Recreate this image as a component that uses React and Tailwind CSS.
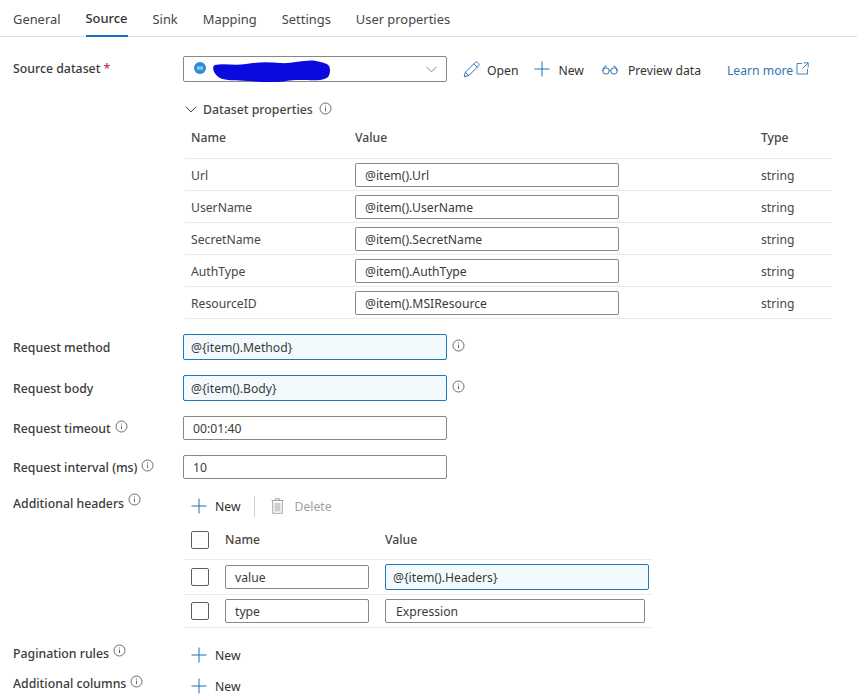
const FONT = "font-['Noto_Sans',sans-serif]";

const TABS = ['General', 'Source', 'Sink', 'Mapping', 'Settings', 'User properties'];

const DATASET_PROPS = [
  ['Url', '@item().Url'],
  ['UserName', '@item().UserName'],
  ['SecretName', '@item().SecretName'],
  ['AuthType', '@item().AuthType'],
  ['ResourceID', '@item().MSIResource'],
];

const Info = ({ className = '' }) => (
  <svg width="13" height="13" viewBox="0 0 13 13" fill="none" className={`shrink-0 text-[#5a5a58] ${className}`}>
    <circle cx="6.5" cy="6.5" r="5.5" stroke="currentColor" strokeWidth="0.9" />
    <path d="M6.5 5.6v3.6M6.5 3.5v1" stroke="currentColor" strokeWidth="0.9" />
  </svg>
);

const Plus = () => (
  <svg width="16" height="16" viewBox="0 0 16 16" fill="none" className="shrink-0 text-[#1c6fb8]">
    <path d="M8 .5v15M.5 8h15" stroke="currentColor" strokeWidth="1" />
  </svg>
);

const Pencil = () => (
  <svg width="17" height="17" viewBox="0 0 17 17" fill="none" className="shrink-0 text-[#2f75b5]">
    <path d="M1.2 15.8l1.2-4.6L12.2 1.4a1.6 1.6 0 012.3 0l1.1 1.1a1.6 1.6 0 010 2.3L5.8 14.6z M2.4 11.2l3.4 3.4 M10.8 2.8l3.4 3.4" stroke="currentColor" strokeWidth="1" strokeLinejoin="round" />
  </svg>
);

const Glasses = () => (
  <svg width="16" height="10" viewBox="0 0 16 10" fill="none" className="shrink-0 text-[#2f75b5]">
    <circle cx="4" cy="6" r="3.2" stroke="currentColor" strokeWidth="1" />
    <circle cx="12" cy="6" r="3.2" stroke="currentColor" strokeWidth="1" />
    <path d="M7 5.600c.6-.5 1.400-.5 2 0M.8 6C1 3 2.500 1 4.500 1M15.200 6C15 3 13.500 1 11.500 1" stroke="currentColor" strokeWidth="1" />
  </svg>
);

const ExternalLink = () => (
  <svg width="13" height="13" viewBox="0 0 13 13" fill="none" className="shrink-0 text-[#2f75b5]">
    <path d="M6 1.500H1v10.500h10.500V7M7.500 .8h4.700v4.700M12 1L6.500 6.500" stroke="currentColor" strokeWidth="0.9" />
  </svg>
);

const Trash = () => (
  <svg width="13" height="16" viewBox="0 0 13 16" fill="none" className="shrink-0 text-[#a6a6a6]">
    <path d="M.5 2.500h12M4.500 2.500V.7h4v1.800M1.700 2.500v12.800h9.600V2.500" stroke="currentColor" strokeWidth="1" />
    <path d="M3.500 5h6v8.500h-6z" fill="currentColor" opacity="0.55" />
  </svg>
);

const Chevron = ({ size = 11, className = '' }) => (
  <svg width={size} height={Math.round(size * 0.6)} viewBox="0 0 11 6.600" fill="none" className={`shrink-0 ${className}`}>
    <path d="M.5 .6l5 5 5-5" stroke="currentColor" strokeWidth="0.9" />
  </svg>
);

const TextBox = ({ value, focused, className = '' }) => (
  <div
    className={`flex items-center rounded-[2px] border pt-[3px] text-[12.200px] text-[#3b3a39] ${
      focused ? 'border-[#1f78b8] bg-[#f3fafe]' : 'border-[#8a8886] bg-white'
    } ${className}`}
  >
    {value}
  </div>
);

const Checkbox = ({ className = '' }) => (
  <div className={`h-[18px] w-[18px] shrink-0 rounded-[2px] border border-[#605e5c] bg-white ${className}`} />
);

const NewButton = ({ className = '' }) => (
  <div className={`flex items-center gap-[8px] text-[12.200px] text-[#323130] ${className}`}>
    <Plus />
    <span className="pt-[3px]">New</span>
  </div>
);

const Label = ({ children, info, infoClass = '', className = '' }) => (
  <div className={`flex w-[183px] shrink-0 items-center gap-[4px] pl-[13px] pt-[2px] text-[12.300px] font-medium text-[#3b3a39] ${className}`}>
    <span className="whitespace-nowrap">{children}</span>
    {info && <Info className={infoClass} />}
  </div>
);

export default function App() {
  return (
    <div className={`flex h-[698px] w-[857px] flex-col overflow-hidden bg-white leading-none ${FONT}`}>
      {/* tabs */}
      <div className="flex h-[37px] shrink-0 gap-[25px] border-b border-[#e1dfdd] pl-[13px] text-[12.900px] text-[#484644]">
        {TABS.map(t => (
          <div
            key={t}
            className={`flex h-[37px] items-center whitespace-nowrap pt-[2px] ${
              t === 'Source' ? 'border-b-2 border-[#1c6fb8] font-medium text-[#323130]' : ''
            }`}
          >
            {t}
          </div>
        ))}
      </div>

      {/* source dataset */}
      <div className="mt-[19px] flex h-[26px] shrink-0 items-center">
        <Label className="mb-[1px]">
          Source dataset <span className="font-normal text-[#a4262c]">*</span>
        </Label>
        <div className="relative flex h-[26px] w-[264px] items-center justify-between rounded-[2px] border border-[#8a8886] pl-[10px] pr-[9px]">
          <svg width="12" height="12" viewBox="0 0 12 12" className="mb-[2px] shrink-0">
            <circle cx="6" cy="6" r="6" fill="#2b8fdb" />
            <path d="M3 5.200h6M3 7h6" stroke="#fff" strokeWidth="0.8" />
          </svg>
          <svg width="120" height="22" viewBox="0 0 120 22" className="absolute left-[28px] top-[3px]">
            <path d="M3 5C12 3 22 6 34 4s22-2 34-1 26-4 36-2 14 3 14 9-2 9-10 10-22-1-34 1-26 1-38 0-22 0-28-3S-1 7 3 5z" fill="#0a0adf" />
          </svg>
          <span />
          <Chevron className="text-[#7a7a78]" />
        </div>
        <div className="ml-[16px] flex items-center text-[12.200px] text-[#323130]">
          <Pencil />
          <span className="ml-[7px] mt-[4px]">Open</span>
          <div className="ml-[16px] flex items-center gap-[8px]">
            <Plus />
            <span className="mt-[4px]">New</span>
          </div>
          <div className="ml-[18px] mt-[1px]"><Glasses /></div>
          <span className="ml-[10px] mt-[4px] whitespace-nowrap">Preview data</span>
          <span className="ml-[26px] mt-[4px] whitespace-nowrap text-[#2f75b5]">Learn more</span>
          <div className="ml-[3px] mb-[2px]"><ExternalLink /></div>
        </div>
      </div>

      {/* dataset properties */}
      <div className="ml-[185px] mt-[19px] flex h-[16px] shrink-0 items-center text-[12.300px] font-medium text-[#484644]">
        <Chevron size={12} className="text-[#323130]" />
        <span className="ml-[6px] pt-[2px]">Dataset properties</span>
        <Info className="ml-[6px] mb-[2px]" />
      </div>

      <div className="ml-[185px] mt-[12px] w-[647px] shrink-0 text-[12.200px] text-[#484644]">
        <div className="flex h-[30px] items-center border-b border-[#edebe9] pb-[11px] font-medium">
          <div className="w-[170px] pl-[6px]">Name</div>
          <div className="w-[406px]">Value</div>
          <div>Type</div>
        </div>
        {DATASET_PROPS.map(([name, value]) => (
          <div key={name} className="flex h-[32px] items-center border-b border-[#edebe9]">
            <div className="w-[170px] pl-[6px] pt-[3px]">{name}</div>
            <TextBox value={value} className="h-[24px] w-[264px] pl-[9px]" />
            <div className="ml-[142px] pt-[3px]">string</div>
          </div>
        ))}
      </div>

      {/* request settings */}
      <div className="mt-[15px] flex h-[26px] shrink-0 items-center">
        <Label>Request method</Label>
        <TextBox value="@{item().Method}" focused className="h-[26px] w-[264px] pl-[7px]" />
        <Info className="ml-[5px] mb-[3px]" />
      </div>
      <div className="mt-[15px] flex h-[26px] shrink-0 items-center">
        <Label>Request body</Label>
        <TextBox value="@{item().Body}" focused className="h-[26px] w-[264px] pl-[7px]" />
        <Info className="ml-[5px] mb-[3px]" />
      </div>
      <div className="mt-[15px] flex h-[24px] shrink-0 items-center">
        <Label info infoClass="mb-[5px]">Request timeout</Label>
        <TextBox value="00:01:40" className="h-[24px] w-[264px] pl-[9px]" />
      </div>
      <div className="mt-[15px] flex h-[24px] shrink-0 items-center">
        <Label info infoClass="mb-[5px]">Request interval (ms)</Label>
        <TextBox value="10" className="h-[24px] w-[264px] pl-[9px]" />
      </div>

      {/* additional headers */}
      <div className="mt-[16px] flex h-[22px] shrink-0 items-center">
        <Label info infoClass="mb-[9px]" className="mb-[6px]">Additional headers</Label>
        <div className="flex items-center pl-[8px]">
          <NewButton />
          <div className="ml-[14px] h-[21px] w-px bg-[#d2d0ce]" />
          <div className="ml-[16px]"><Trash /></div>
          <span className="ml-[10px] pt-[3px] text-[12.200px] text-[#a19f9d]">Delete</span>
        </div>
      </div>

      <div className="ml-[184px] mt-[12px] w-[468px] shrink-0 text-[12.200px] text-[#484644]">
        <div className="flex h-[31px] items-center border-b border-[#edebe9] pb-[8px] font-medium">
          <Checkbox className="ml-[7px]" />
          <div className="ml-[16px] w-[160px]">Name</div>
          <div>Value</div>
        </div>
        <div className="flex h-[35px] items-center border-b border-[#edebe9]">
          <Checkbox className="ml-[7px]" />
          <TextBox value="value" className="ml-[16px] h-[24px] w-[144px] pl-[9px]" />
          <TextBox value="@{item().Headers}" focused className="ml-[16px] h-[26px] w-[264px] pl-[7px]" />
        </div>
        <div className="flex h-[33px] items-center border-b border-[#edebe9]">
          <Checkbox className="ml-[7px]" />
          <TextBox value="type" className="ml-[16px] h-[24px] w-[144px] pl-[9px]" />
          <TextBox value="Expression" className="ml-[16px] h-[24px] w-[260px] pl-[10px]" />
        </div>
      </div>

      <div className="mt-[17px] flex h-[20px] shrink-0 items-center">
        <Label info infoClass="mb-[8px]" className="mb-[4px]">Pagination rules</Label>
        <NewButton className="ml-[8px]" />
      </div>
      <div className="mt-[10px] flex h-[20px] shrink-0 items-center">
        <Label info infoClass="mb-[6px]" className="mb-[4px]">Additional columns</Label>
        <NewButton className="ml-[8px] mt-[2px]" />
      </div>
    </div>
  );
}
